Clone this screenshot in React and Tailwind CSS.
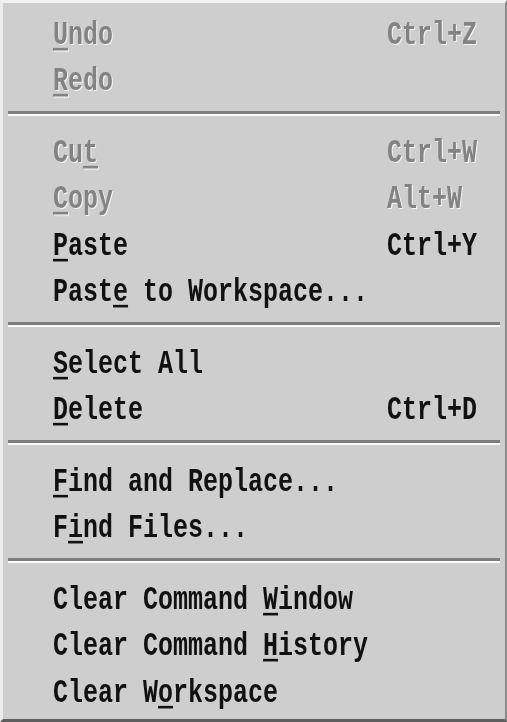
import React from 'react';

const groups = [
  [
    { label: 'Undo', key: 0, shortcut: 'Ctrl+Z', disabled: true },
    { label: 'Redo', key: 0, disabled: true },
  ],
  [
    { label: 'Cut', key: 2, shortcut: 'Ctrl+W', disabled: true },
    { label: 'Copy', key: 0, shortcut: 'Alt+W', disabled: true },
    { label: 'Paste', key: 0, shortcut: 'Ctrl+Y' },
    { label: 'Paste to Workspace...', key: 4 },
  ],
  [
    { label: 'Select All', key: 0 },
    { label: 'Delete', key: 0, shortcut: 'Ctrl+D' },
  ],
  [
    { label: 'Find and Replace...', key: 0 },
    { label: 'Find Files...', key: 1 },
  ],
  [
    { label: 'Clear Command Window', key: 14 },
    { label: 'Clear Command History', key: 14 },
    { label: 'Clear Workspace', key: 7 },
  ],
];

function Label({ text, mnemonic }) {
  return (
    <span className="inline-block origin-center scale-y-[1.3] whitespace-pre">
      {text.slice(0, mnemonic)}
      <span className="underline decoration-[1.5px] underline-offset-[3px]">{text[mnemonic]}</span>
      {text.slice(mnemonic + 1)}
    </span>
  );
}

function MenuItem({ item }) {
  const tone = item.disabled
    ? 'text-[#838383] [text-shadow:1px_1px_0_#f4f4f4]'
    : 'text-[#111111]';
  return (
    <div className={`flex h-[46.5px] items-center ${tone}`}>
      <div className="w-[384px] pl-[50px]">
        <Label text={item.label} mnemonic={item.key} />
      </div>
      {item.shortcut && (
        <span className="inline-block origin-center scale-y-[1.3] whitespace-pre">{item.shortcut}</span>
      )}
    </div>
  );
}

function Separator() {
  return (
    <div className="flex h-[25px] flex-col pl-[5px] pr-[5px] pt-[6px]">
      <div className="h-[3px] bg-[#7e7e7e]" />
      <div className="h-[2px] bg-[#fbfbfb]" />
    </div>
  );
}

export default function App() {
  return (
    <div className="h-[722px] w-[507px] overflow-hidden bg-[#cecece]">
      <div
        className="flex h-full flex-col border-t-[3px] border-l-[3px] border-r-[2px] border-b-[3px] border-t-[#f2f2f2] border-l-[#ececec] border-r-[#8a8a8a] border-b-[#5e5e5e] pt-[9px] text-[25px] font-bold leading-none"
        style={{ fontFamily: '"Liberation Mono", "Courier New", monospace' }}
      >
        {groups.map((g, gi) => (
          <React.Fragment key={gi}>
            {gi > 0 && <Separator />}
            {g.map((item) => (
              <MenuItem key={item.label} item={item} />
            ))}
          </React.Fragment>
        ))}
      </div>
    </div>
  );
}
